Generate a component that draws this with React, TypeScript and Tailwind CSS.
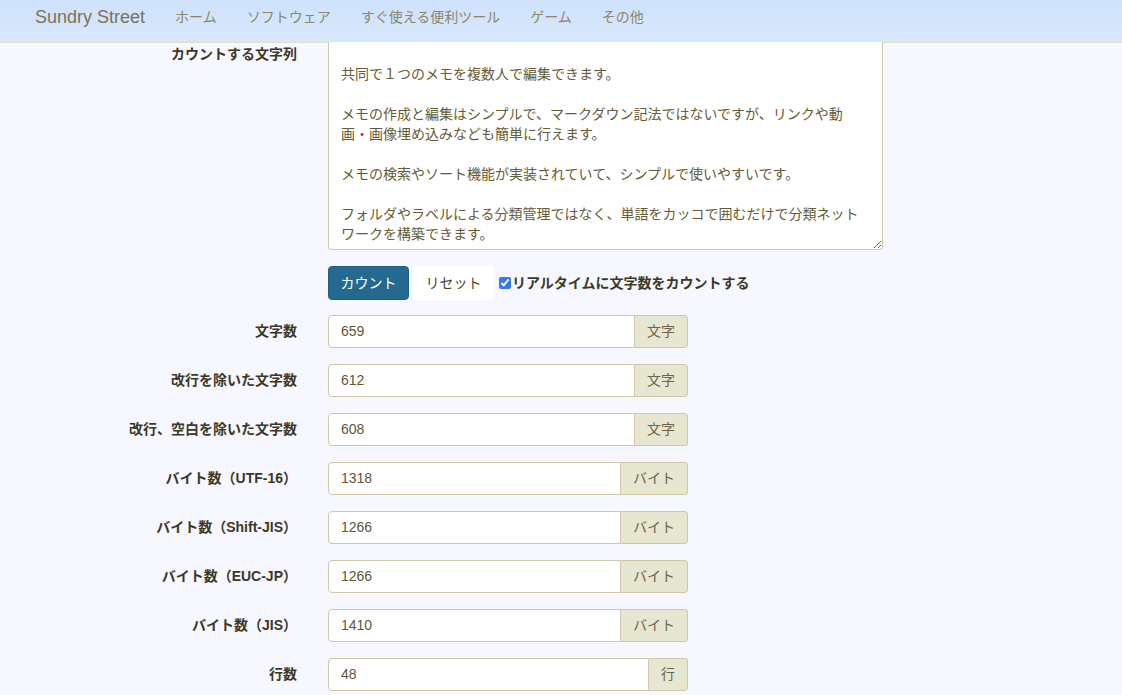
import { useState } from 'react'

const navItems = ['ホーム', 'ソフトウェア', 'すぐ使える便利ツール', 'ゲーム', 'その他']

const sample =
  '\n共同で１つのメモを複数人で編集できます。\n\nメモの作成と編集はシンプルで、マークダウン記法ではないですが、リンクや動画・画像埋め込みなども簡単に行えます。\n\nメモの検索やソート機能が実装されていて、シンプルで使いやすいです。\n\nフォルダやラベルによる分類管理ではなく、単語をカッコで囲むだけで分類ネットワークを構築できます。'

const results = [
  { label: '文字数', value: '659', unit: '文字' },
  { label: '改行を除いた文字数', value: '612', unit: '文字' },
  { label: '改行、空白を除いた文字数', value: '608', unit: '文字' },
  { label: 'バイト数（UTF-16）', value: '1318', unit: 'バイト' },
  { label: 'バイト数（Shift-JIS）', value: '1266', unit: 'バイト' },
  { label: 'バイト数（EUC-JP）', value: '1266', unit: 'バイト' },
  { label: 'バイト数（JIS）', value: '1410', unit: 'バイト' },
  { label: '行数', value: '48', unit: '行' },
]

function Navbar() {
  return (
    <nav className="h-[43px] flex items-start pt-[5px] bg-gradient-to-b from-[#cfe2fc] to-[#d8e8fc] border-b border-[#e4e0c2]">
      <span className="ml-[35px] text-[18px] leading-[24px] text-[#7b7257]">Sundry Street</span>
      <ul className="flex ml-[15px] text-[14px] leading-[24px] text-[#8d8566]">
        {navItems.map(item => (
          <li key={item} className="px-[15px]">
            {item}
          </li>
        ))}
      </ul>
    </nav>
  )
}

function ResultRow({ label, value, unit }: { label: string; value: string; unit: string }) {
  return (
    <div className="flex items-center h-[33px] mb-[16px]">
      <div className="w-[297px] text-right font-bold text-[14px] text-[#3d3725]">{label}</div>
      <div className="ml-[31px] w-[360px] h-[33px] flex">
        <div className="flex-1 flex items-center pl-[12px] bg-white border border-[#cfc8a2] rounded-l-[4px] text-[14px] text-[#5f5637]">
          {value}
        </div>
        <div className="flex items-center px-[12px] bg-[#e7e6d1] border border-l-0 border-[#cfc8a2] rounded-r-[4px] text-[14px] text-[#6c6446]">
          {unit}
        </div>
      </div>
    </div>
  )
}

export default function App() {
  const [text, setText] = useState(sample)
  const [realtime, setRealtime] = useState(true)

  return (
    <div className="min-h-screen bg-[#f6f7ff] font-['Liberation_Sans','Noto_Sans_CJK_JP',sans-serif] overflow-hidden h-[695px]">
      <Navbar />
      <div className="flex">
        <div className="w-[297px] text-right font-bold text-[14px] text-[#3d3725] pt-[1px] leading-[20px]">
          カウントする文字列
        </div>
        <textarea
          className="ml-[31px] w-[555px] h-[208px] mt-[-1px] px-[12px] pt-[2px] bg-white border border-t-0 border-[#cfc8a2] rounded-b-[4px] text-[14px] leading-[20px] text-[#665b36] resize-y outline-none overflow-hidden"
          value={text}
          onChange={e => setText(e.target.value)}
        />
      </div>
      <div className="flex items-center mt-[16px] ml-[328px] h-[34px]">
        <button className="w-[81px] h-[34px] bg-[#246a8e] border border-[#1f5f80] rounded-[4px] text-white text-[14px]">
          カウント
        </button>
        <button className="ml-[4px] w-[81px] h-[34px] bg-white rounded-[4px] text-[#4a4330] text-[14px]">
          リセット
        </button>
        <label className="flex items-center ml-[5px] font-bold text-[14px] text-[#3d3725]">
          <input
            type="checkbox"
            checked={realtime}
            onChange={e => setRealtime(e.target.checked)}
            className="w-[12px] h-[12px] mr-[1px] accent-[#3478f6]"
          />
          リアルタイムに文字数をカウントする
        </label>
      </div>
      <div className="mt-[15px]">
        {results.map(r => (
          <ResultRow key={r.label} {...r} />
        ))}
      </div>
    </div>
  )
}
